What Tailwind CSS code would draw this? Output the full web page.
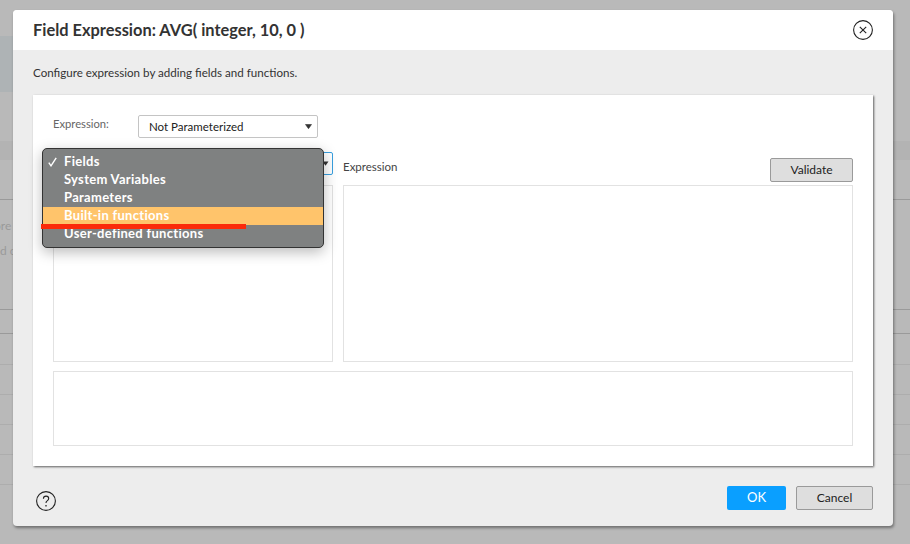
<!DOCTYPE html>
<html lang="en">
  <head>
    <meta charset="UTF-8" />
    <title>Field Expression</title>
    <script src="https://cdn.jsdelivr.net/npm/@tailwindcss/browser@4"></script>
  </head>
  <body class="relative w-[910px] h-[544px] overflow-hidden bg-[#b9b9b9] font-['Lato',sans-serif] text-[#333]">
    <!-- page behind the modal -->
    <div class="absolute left-0 top-[36px] w-[13px] h-[56px] bg-[#aeb3b5]"></div>
    <div class="absolute left-0 top-[141px] w-[13px] h-[19px] bg-[#b3b3b3]"></div>
    <div class="absolute left-0 top-[199px] w-[13px] h-px bg-[#9a9a9a]"></div>
    <div class="absolute left-0 top-[309px] w-[13px] h-px bg-[#9a9a9a]"></div>
    <div class="absolute left-0 top-[333px] w-[13px] h-px bg-[#9a9a9a]"></div>
    <div class="absolute left-0 top-[364px] w-[13px] h-px bg-[#adadad]"></div>
    <div class="absolute left-0 top-[394px] w-[13px] h-px bg-[#adadad]"></div>
    <div class="absolute left-0 top-[424px] w-[13px] h-px bg-[#adadad]"></div>
    <div class="absolute left-0 top-[454px] w-[13px] h-px bg-[#adadad]"></div>
    <div class="absolute left-0 top-[484px] w-[13px] h-px bg-[#adadad]"></div>
    <div class="absolute right-0 top-[141px] w-[17px] h-[19px] bg-[#b3b3b3]"></div>
    <div class="absolute right-0 top-[199px] w-[17px] h-px bg-[#9a9a9a]"></div>
    <div class="absolute right-0 top-[309px] w-[17px] h-px bg-[#9a9a9a]"></div>
    <div class="absolute right-0 top-[333px] w-[17px] h-px bg-[#9a9a9a]"></div>
    <div class="absolute right-0 top-[364px] w-[17px] h-px bg-[#adadad]"></div>
    <div class="absolute right-0 top-[394px] w-[17px] h-px bg-[#adadad]"></div>
    <div class="absolute right-0 top-[424px] w-[17px] h-px bg-[#adadad]"></div>
    <div class="absolute right-0 top-[454px] w-[17px] h-px bg-[#adadad]"></div>
    <div class="absolute right-0 top-[484px] w-[17px] h-px bg-[#adadad]"></div>
    <span class="absolute left-[-6px] top-[218px] text-[12px] leading-[15px] text-[#999]">ore</span>
    <span class="absolute left-0 top-[243px] text-[12px] leading-[15px] text-[#999]">d c</span>

    <!-- modal -->
    <div class="relative ml-[13px] top-[10px] w-[880px] h-[516px] flex flex-col rounded-[4px] bg-[#ededed] shadow-[1px_2px_3px_rgba(0,0,0,0.4)] overflow-hidden">
      <div class="h-[40px] shrink-0 flex items-center justify-between pl-[20px] pr-[20px] bg-white">
        <h1 class="text-[16.4px] font-bold text-[#333]">Field Expression: AVG( integer, 10, 0 )</h1>
        <svg width="20" height="20" viewBox="0 0 20 20" fill="none" stroke="#222" stroke-width="1.1">
          <circle cx="10" cy="10" r="9.4" />
          <path d="M6.8 6.8l6.4 6.4M13.2 6.8l-6.4 6.4" />
        </svg>
      </div>
      <p class="h-[45px] shrink-0 pl-[20px] pt-[15px] text-[11.6px] leading-[16px] text-[#333]">Configure expression by adding fields and functions.</p>

      <div class="mx-[20px] w-[840px] h-[371px] shrink-0 bg-white shadow-[1px_1px_2px_rgba(0,0,0,0.6)] px-[20px] pt-[20px] flex flex-col">
        <div class="flex items-center h-[23px]">
          <span class="w-[85px] text-[11.2px] text-[#666] -mt-[5px]">Expression:</span>
          <div class="w-[180px] h-[23px] flex items-center justify-between pl-[10px] pr-[5px] border border-[#c4c4c4] rounded-[2px] text-[11.5px] text-[#222]">
            Not Parameterized
            <svg width="7" height="5" viewBox="0 0 7 5"><path d="M0.5 0.5h6L3.5 4.7z" fill="#333" stroke="#333" stroke-linejoin="round" stroke-width="0.6" /></svg>
          </div>
        </div>

        <div class="flex gap-[10px] mt-[14px]">
          <div class="w-[280px] flex flex-col">
            <div class="h-[23px] flex items-center justify-end pr-[3px] border border-[#39a0e0] rounded-[2px]">
              <svg width="7" height="5" viewBox="0 0 7 5"><path d="M0.5 0.5h6L3.5 4.7z" fill="#333" /></svg>
            </div>
            <div class="h-[177px] mt-[10px] border border-[#e2e2e2]"></div>
          </div>
          <div class="flex-1 flex flex-col">
            <div class="h-[33px] flex items-start justify-between">
              <span class="mt-[7px] text-[11.5px] leading-[16px] text-[#444]">Expression</span>
              <button class="w-[83px] h-[24px] mt-[6px] rounded-[2px] border border-[#9a9a9a] bg-[#dedede] text-[12px] text-[#222]">Validate</button>
            </div>
            <div class="h-[177px] border border-[#e2e2e2]"></div>
          </div>
        </div>

        <div class="h-[75px] mt-[9px] border border-[#e2e2e2]"></div>
      </div>

      <div class="flex items-start justify-between pl-[23px] pr-[20px] pt-[20px]">
        <svg class="mt-[5px]" width="20" height="20" viewBox="0 0 20 20" fill="none" stroke="#222" stroke-width="1.1">
          <circle cx="10" cy="10" r="9.4" />
          <path d="M7.4 7.8c0-1.7 1.2-2.7 2.7-2.7s2.6 1 2.6 2.4c0 1.2-.8 1.8-1.6 2.4-.7.5-1.1 1-1.1 2" />
          <path d="M10 14v1.4" stroke-width="1.3" />
        </svg>
        <div class="flex gap-[10px]">
          <button class="w-[59px] h-[24px] rounded-[2px] bg-[#0a9fff] text-[13px] text-white">OK</button>
          <button class="w-[77px] h-[24px] rounded-[2px] border border-[#9a9a9a] bg-[#dedede] text-[12px] text-[#222]">Cancel</button>
        </div>
      </div>
    </div>

    <!-- native select menu, open over the dialog -->
    <div class="absolute left-[42px] top-[148px] w-[282px] h-[100px] py-[4px] rounded-[5px] border border-[#333] bg-[#7f8181] shadow-[0_4px_14px_rgba(0,0,0,0.28)] text-[13px] tracking-[0.3px] font-bold text-white">
      <div class="relative h-[18px] leading-[16px] pl-[21px]">
        <svg class="absolute left-[5px] top-[4px]" width="9" height="10" viewBox="0 0 9 10" fill="none" stroke="#fff" stroke-width="1.4"><path d="M0.8 5.6L3 8.8L8.2 0.8" /></svg>
        Fields
      </div>
      <div class="h-[18px] leading-[16px] pl-[21px]">System Variables</div>
      <div class="h-[18px] leading-[16px] pl-[21px]">Parameters</div>
      <div class="h-[18px] leading-[16px] pl-[21px] bg-[#ffc46b]">Built-in functions</div>
      <div class="h-[18px] leading-[16px] pl-[21px]">User-defined functions</div>
    </div>
    <!-- red annotation -->
    <div class="absolute left-[41px] top-[224px] w-[205px] h-[5px] bg-[#fb2a0a]"></div>
  </body>
</html>
